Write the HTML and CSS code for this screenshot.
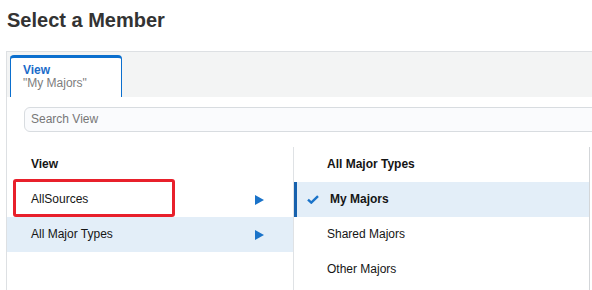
FILE: index.html
```html
<!DOCTYPE html>
<html>
<head>
<meta charset="utf-8">
<link rel="stylesheet" href="styles.css">
</head>
<body>
<h1 class="title">Select a Member</h1>
<div class="panel">
  <div class="tabbar">
    <div class="tab">
      <div class="tab-name">View</div>
      <div class="tab-sub">"My Majors"</div>
    </div>
  </div>
  <div class="content">
    <div class="search">Search View</div>
    <div class="columns">
      <div class="col col-left">
        <div class="row head">View</div>
        <div class="row">
          <span class="label">AllSources</span>
          <svg class="arrow" width="9" height="10" viewBox="0 0 9 10"><polygon points="0,0 9,5 0,10"/></svg>
          <div class="callout"></div>
        </div>
        <div class="row active">
          <span class="label">All Major Types</span>
          <svg class="arrow" width="9" height="10" viewBox="0 0 9 10"><polygon points="0,0 9,5 0,10"/></svg>
        </div>
      </div>
      <div class="col col-right">
        <div class="row head">All Major Types</div>
        <div class="row active selected">
          <svg class="check" width="12" height="9" viewBox="0 0 12 9"><path d="M1 4.6 L4.3 7.6 L11 1.2" fill="none" stroke-width="2.4"/></svg>
          <span class="label strong">My Majors</span>
        </div>
        <div class="row"><span class="label">Shared Majors</span></div>
        <div class="row"><span class="label">Other Majors</span></div>
      </div>
    </div>
  </div>
</div>
</body>
</html>
```
FILE: styles.css
```css
html, body {
  margin: 0;
  padding: 0;
  background: #ffffff;
  overflow: hidden;
}
body {
  font-family: "Liberation Sans", Arial, sans-serif;
  font-size: 12px;
  color: #151515;
  width: 592px;
  height: 290px;
}
.title {
  margin: 8px 0 0 7px;
  font-size: 20px;
  line-height: 24px;
  font-weight: bold;
  color: #333333;
}
.panel {
  margin: 19px 0 0 6px;
  width: 586px;
  height: 239px;
  overflow: hidden;
  border-left: 1px solid #dde0e3;
  border-top: 1px solid #dde0e3;
  box-sizing: border-box;
}
.tabbar {
  background: #f3f4f4;
  height: 45px;
  padding: 3px 0 0 3px;
  box-sizing: border-box;
  display: flex;
}
.tab {
  width: 112px;
  height: 42px;
  box-sizing: border-box;
  background: #ffffff;
  border-top: 3px solid #0b6fce;
  border-left: 1px solid #0b6fce;
  border-right: 1px solid #0b6fce;
  border-radius: 4px 4px 0 0;
  padding: 6px 0 0 12px;
  line-height: 13px;
}
.tab-name {
  font-weight: bold;
  color: #1a6bc9;
}
.tab-sub {
  color: #7d7d7d;
}
.content {
  padding-top: 10px;
}
.search {
  margin-left: 17px;
  margin-right: -8px;
  height: 25px;
  box-sizing: border-box;
  border: 1px solid #d8dce0;
  border-radius: 6px;
  background: #fafbfd;
  color: #777777;
  padding: 0 0 1px 6px;
  display: flex;
  align-items: center;
}
.columns {
  margin-top: 15px;
  display: flex;
}
.col {
  min-height: 160px;
}
.col-left {
  width: 286px;
  border-right: 1px solid #dfe2e5;
}
.col-right {
  width: 295px;
  border-right: 1px solid #d3d6d9;
}
.row {
  position: relative;
  height: 35px;
  box-sizing: border-box;
  display: flex;
  align-items: center;
  padding-bottom: 2px;
}
.col-left .row {
  padding-left: 24px;
  padding-right: 29px;
}
.col-right .row {
  padding-left: 33px;
}
.head {
  font-weight: bold;
}
.label {
  flex: 1;
}
.strong {
  font-weight: bold;
}
.active {
  background: #e3eef8;
}
.arrow {
  fill: #1a73c9;
  margin-top: 2px;
}
.col-right .selected {
  padding-left: 10px;
  border-left: 3px solid #1761ad;
}
.check {
  stroke: #1a73c9;
  margin-right: 11px;
  margin-top: 2px;
}
.callout {
  position: absolute;
  left: 6px;
  top: -3px;
  width: 162px;
  height: 38px;
  box-sizing: border-box;
  border: 3px solid #e8202b;
  border-radius: 3px;
}
```
